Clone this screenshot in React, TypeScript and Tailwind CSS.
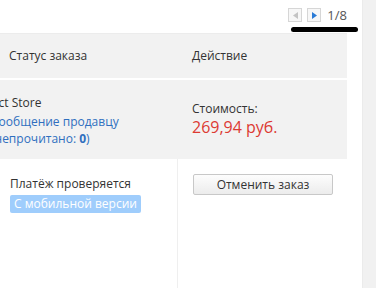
import React from 'react';

const Pager = () => (
  <div className="flex flex-col items-end pr-[4px] pt-[8px] h-[33px]">
    <div className="flex items-center gap-[6px] pr-[11px]">
      <span className="w-[14px] h-[14px] border border-[#d6d6d6] bg-[#f7f7f7] flex items-center justify-center">
        <svg width="5" height="7" viewBox="0 0 5 7"><path d="M5 0 L0 3.5 L5 7 Z" fill="#c4c4c4" /></svg>
      </span>
      <span className="w-[14px] h-[14px] border border-[#d6d6d6] bg-[#f7f7f7] flex items-center justify-center ml-[-1px]">
        <svg width="5" height="7" viewBox="0 0 5 7"><path d="M0 0 L5 3.5 L0 7 Z" fill="#2b7bd6" /></svg>
      </span>
      <span className="text-[13px] text-[#555] leading-none">1/8</span>
    </div>
    <div className="w-[67px] h-[5px] rounded-full bg-black mt-[5px]" />
  </div>
);

export default function App() {
  return (
    <div className="w-[376px] h-[288px] bg-white flex overflow-hidden text-[#333] text-[12px]" style={{ fontFamily: '"Open Sans", "Noto Sans", sans-serif' }}>
      <div className="flex-1 flex flex-col">
        <Pager />
        <div className="w-[347px] flex flex-col flex-1">
          <div className="grid grid-cols-[177px_170px] bg-[#f2f2f2] h-[45px] items-center border-t border-[#ececec]">
            <div className="pl-[9px]">Статус заказа</div>
            <div className="pl-[15px]">Действие</div>
          </div>
          <div className="h-[2px] bg-white" />
          <div className="grid grid-cols-[177px_170px] bg-[#f2f2f2] h-[79px]">
            <div className="overflow-hidden">
              <div className="ml-[-9px] pt-[14px] leading-[17px] whitespace-nowrap">
                <div>Act Store</div>
                <div className="text-[#2f6fbf] mt-[2px]">Сообщение продавцу</div>
                <div className="text-[#2f6fbf]">(непрочитано: <b>0</b>)</div>
              </div>
            </div>
            <div className="pl-[15px] pt-[20px]">
              <div className="leading-[17px]">Стоимость:</div>
              <div className="text-[16px] text-[#dd3a32] leading-[20px]">269,94 руб.</div>
            </div>
          </div>
          <div className="grid grid-cols-[177px_170px] flex-1">
            <div className="pl-[10px] pt-[16px]">
              <div className="leading-[17px]">Платёж проверяется</div>
              <span className="inline-block mt-[3px] bg-[#9fcdfc] text-white rounded-[2px] px-[4px] leading-[18px]">С мобильной версии</span>
            </div>
            <div className="border-l border-[#efefef] pl-[15px] pt-[15px]">
              <button className="w-[140px] h-[21px] border border-[#c8c8c8] rounded-[2px] bg-gradient-to-b from-[#fdfdfd] to-[#ececec] text-[12px] text-[#333] leading-none">
                Отменить заказ
              </button>
            </div>
          </div>
        </div>
      </div>
      <div className="w-[14px] bg-[#f1f1f1] border-l border-[#ebebeb]" />
    </div>
  );
}
